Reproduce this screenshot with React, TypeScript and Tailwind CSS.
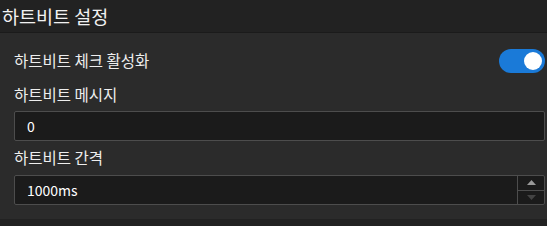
import { useState } from "react";

const font = { fontFamily: '"Noto Sans CJK KR", "Noto Sans", sans-serif' };

export default function App() {
  const [enabled, setEnabled] = useState(true);
  const [message, setMessage] = useState("0");
  const [interval, setIntervalMs] = useState("1000ms");

  return (
    <div
      className="w-[547px] h-[226px] bg-[#222222] text-white overflow-hidden font-['Noto_Sans_CJK_KR',sans-serif]"
      style={font}
    >
      {/* Header */}
      <div className="h-[33px] flex items-center pl-[2px] border-b border-[#1b1b1b]">
        <h2 className="text-[18.5px] leading-none text-[#f2f2f2]">하트비트 설정</h2>
      </div>

      {/* Panel */}
      <div className="bg-[#2b2b2b] pl-[14px] pr-[2px] pt-[16px] pb-[14px]">
        <div className="h-[24px] flex items-center justify-between">
          <span className="text-[15.5px] text-[#eeeeee]">하트비트 체크 활성화</span>
          <button
            onClick={() => setEnabled(!enabled)}
            className={`w-[46px] h-[24px] rounded-full flex items-center px-[3px] ${
              enabled ? "bg-[#1a7ad8] justify-end" : "bg-[#555555] justify-start"
            }`}
            aria-label="toggle"
          >
            <span className="w-[18px] h-[18px] rounded-full bg-white" />
          </button>
        </div>

        <div className="mt-[10px] mb-[6px] text-[15.5px] leading-[22px] text-[#eeeeee]">
          하트비트 메시지
        </div>
        <input
          value={message}
          onChange={(e) => setMessage(e.target.value)}
          className="w-full h-[30px] bg-[#1b1b1b] border border-[#4d4d4d] rounded-[2px] px-[12px] text-[14px] text-white outline-none"
        />

        <div className="mt-[5px] mb-[7px] text-[15.5px] leading-[22px] text-[#eeeeee]">
          하트비트 간격
        </div>
        <div className="w-full h-[30px] flex bg-[#1b1b1b] border border-[#4d4d4d] rounded-[2px]">
          <input
            value={interval}
            onChange={(e) => setIntervalMs(e.target.value)}
            className="flex-1 min-w-0 bg-transparent px-[12px] text-[14px] text-white outline-none"
          />
          <div className="w-[27px] flex flex-col border-l border-[#4d4d4d]">
            <button className="flex-1 flex items-center justify-center border-b border-[#4d4d4d]">
              <svg width="9" height="5" viewBox="0 0 9 5">
                <path d="M0 5 L4.5 0 L9 5 Z" fill="#9a9a9a" />
              </svg>
            </button>
            <button className="flex-1 flex items-center justify-center">
              <svg width="9" height="5" viewBox="0 0 9 5">
                <path d="M0 0 L4.5 5 L9 0 Z" fill="#444444" />
              </svg>
            </button>
          </div>
        </div>
      </div>
    </div>
  );
}
